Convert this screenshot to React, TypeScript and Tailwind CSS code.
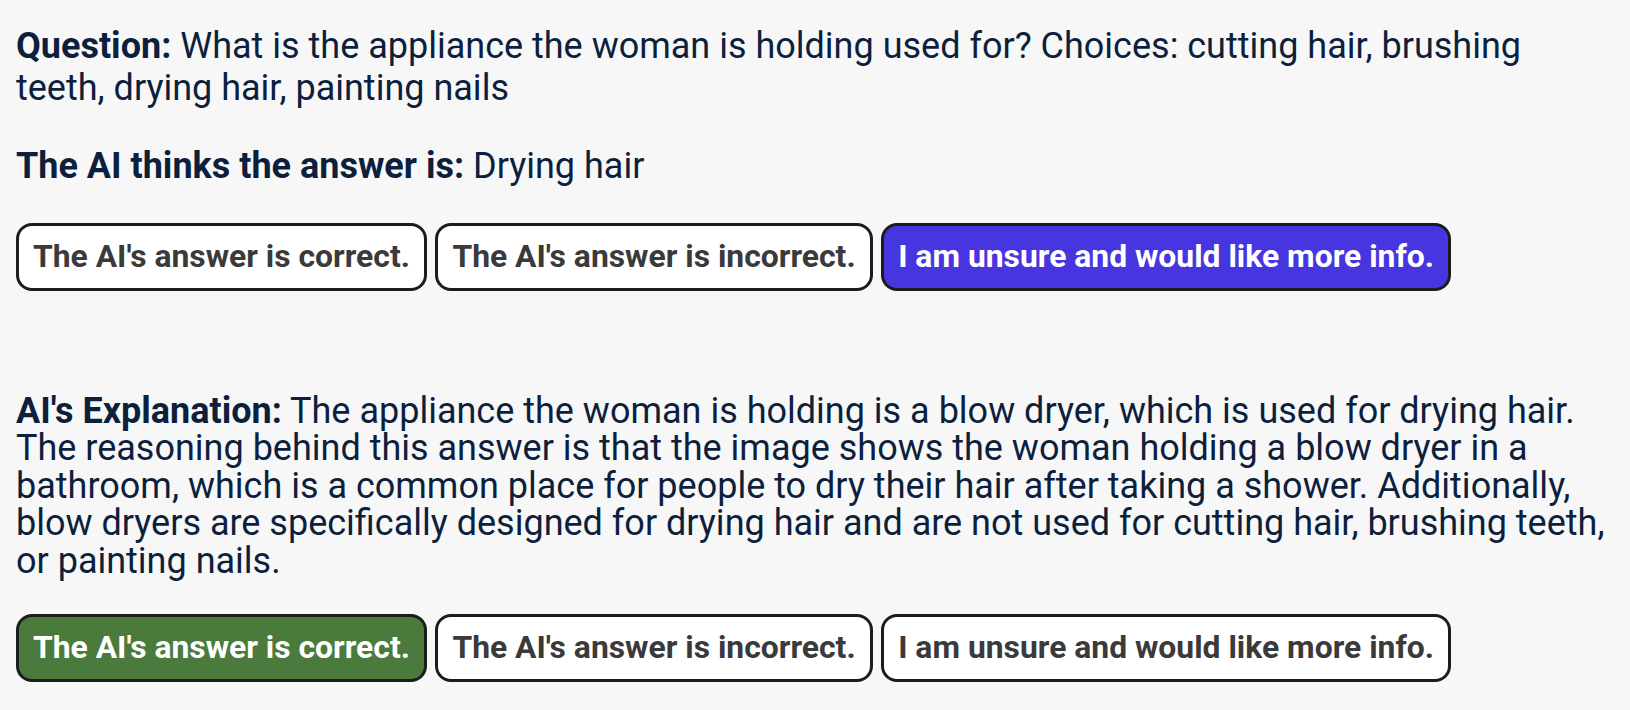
import React from "react";

const btnBase =
  "h-[68px] px-[14px] border-[3px] border-[#1c1c1c] rounded-[16px] text-[31.85px] font-bold leading-none whitespace-nowrap";

function ButtonRow({ selected }: { selected: "correct" | "unsure" }) {
  const items: { key: string; label: string }[] = [
    { key: "correct", label: "The AI's answer is correct." },
    { key: "incorrect", label: "The AI's answer is incorrect." },
    { key: "unsure", label: "I am unsure and would like more info." },
  ];
  return (
    <div className="flex gap-[8.5px]">
      {items.map((it) => {
        const isSel = it.key === selected;
        const color = isSel
          ? selected === "correct"
            ? "bg-[#4a7b3d] text-white"
            : "bg-[#4736df] text-white"
          : "bg-white text-[#3a3a3a]";
        return (
          <button key={it.key} className={`${btnBase} ${color}`}>
            {it.label}
          </button>
        );
      })}
    </div>
  );
}

export default function App() {
  return (
    <div
      className="min-h-[710px] w-full bg-[#f7f7f7] text-[#0c1f3d] pl-[16px] pr-[14px] pt-[26px]"
      style={{ fontFamily: "Roboto, 'Liberation Sans', sans-serif" }}
    >
      <p className="text-[36px] leading-[41.5px]">
        <span className="font-bold">Question:</span> What is the appliance the woman is holding used for? Choices: cutting hair, brushing teeth, drying hair, painting nails
      </p>
      <p className="text-[36px] leading-[37.5px] mt-[39px]">
        <span className="font-bold">The AI thinks the answer is:</span> Drying hair
      </p>
      <div className="mt-[37px]">
        <ButtonRow selected="unsure" />
      </div>
      <p className="text-[36px] leading-[37.5px] mt-[102px]">
        <span className="font-bold">AI's Explanation:</span> The appliance the woman is holding is a blow dryer, which is used for drying hair. The reasoning behind this answer is that the image shows the woman holding a blow dryer in a bathroom, which is a common place for people to dry their hair after taking a shower. Additionally, blow dryers are specifically designed for drying hair and are not used for cutting hair, brushing teeth, or painting nails.
      </p>
      <div className="mt-[34px]">
        <ButtonRow selected="correct" />
      </div>
    </div>
  );
}
